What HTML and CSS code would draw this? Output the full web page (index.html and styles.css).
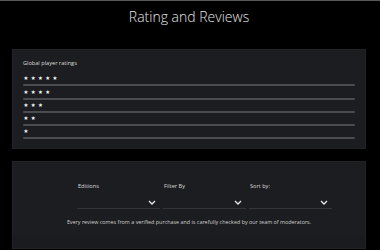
FILE: index.html
```html
<!DOCTYPE html>
<html>
<head>
<meta charset="utf-8">
<link rel="stylesheet" href="styles.css">
</head>
<body>
<div class="page">
  <h1 class="title">Rating and Reviews</h1>
  <section class="card ratings">
    <div class="ratings-label">Global player ratings</div>
    <div class="row"><div class="stars"><span>★</span><span>★</span><span>★</span><span>★</span><span>★</span></div><div class="bar"></div></div>
    <div class="row"><div class="stars"><span>★</span><span>★</span><span>★</span><span>★</span></div><div class="bar"></div></div>
    <div class="row"><div class="stars"><span>★</span><span>★</span><span>★</span></div><div class="bar"></div></div>
    <div class="row"><div class="stars"><span>★</span><span>★</span></div><div class="bar"></div></div>
    <div class="row"><div class="stars"><span>★</span></div><div class="bar"></div></div>
  </section>
  <section class="card filters">
    <div class="selects">
      <div class="field">
        <div class="field-label">Editions</div>
        <div class="select"><svg class="chev" viewBox="0 0 8 5" width="8" height="5"><path d="M1 1 L4 4 L7 1" fill="none" stroke="#e8e8e8" stroke-width="1.3"/></svg></div>
      </div>
      <div class="field">
        <div class="field-label">Filter By</div>
        <div class="select"><svg class="chev" viewBox="0 0 8 5" width="8" height="5"><path d="M1 1 L4 4 L7 1" fill="none" stroke="#e8e8e8" stroke-width="1.3"/></svg></div>
      </div>
      <div class="field">
        <div class="field-label">Sort by:</div>
        <div class="select"><svg class="chev" viewBox="0 0 8 5" width="8" height="5"><path d="M1 1 L4 4 L7 1" fill="none" stroke="#e8e8e8" stroke-width="1.3"/></svg></div>
      </div>
    </div>
    <p class="note">Every review comes from a verified purchase and is carefully checked by our team of moderators.</p>
    <div class="footer"></div>
  </section>
</div>
</body>
</html>
```
FILE: styles.css
```css
html, body {
  margin: 0;
  padding: 0;
  background: #000;
  height: 100%;
  overflow: hidden;
}
.page {
  border-top: 1px solid #5a5a5a;
  font-family: "Open Sans", "Liberation Sans", sans-serif;
  color: #e6e6e6;
  padding: 0 14px 0 12px;
}
.title {
  margin: 0;
  height: 48px;
  padding-top: 6px;
  box-sizing: border-box;
  font-weight: 300;
  font-size: 14px;
  line-height: 20px;
  text-align: center;
  color: #e4e4e4;
}
.card {
  background: #1c1d20;
  border: 1px solid #222327;
}
.ratings {
  height: 100px;
  box-sizing: border-box;
  padding: 9px 10px 0 10px;
}
.ratings-label {
  font-size: 5.6px;
  line-height: 8px;
  color: #dcdcdc;
  margin-bottom: 6px;
}
.row {
  height: 13.3px;
  display: flex;
  flex-direction: column;
  justify-content: flex-end;
}
.stars {
  display: flex;
  gap: 2.4px;
  padding-left: 0.5px;
  font-family: "DejaVu Sans", sans-serif;
  font-size: 5.4px;
  line-height: 5px;
  color: #ffffff;
  margin-bottom: 3px;
}
.bar {
  height: 2px;
  background: #4b4c50;
  border-radius: 1px;
}
.filters {
  margin-top: 12px;
  height: 88px;
  overflow: hidden;
  padding-top: 20px;
  box-sizing: border-box;
}
.selects {
  display: flex;
  gap: 3px;
  padding-left: 64px;
}
.field {
  width: 83px;
}
.field-label {
  font-size: 5.6px;
  line-height: 8px;
  color: #dcdcdc;
  padding-left: 1px;
  height: 10px;
}
.select {
  height: 17px;
  border-bottom: 1px solid #34353a;
  display: flex;
  justify-content: flex-end;
  align-items: center;
  padding-right: 4px;
  box-sizing: border-box;
}
.chev {
  display: block;
  margin-top: 4px;
}
.note {
  margin: 9px 0 0 0;
  text-align: center;
  font-size: 5.4px;
  line-height: 8px;
  color: #cfcfcf;
}
.footer {
  margin-top: 10px;
  height: 20px;
  background: #1a1b1e;
}
```
